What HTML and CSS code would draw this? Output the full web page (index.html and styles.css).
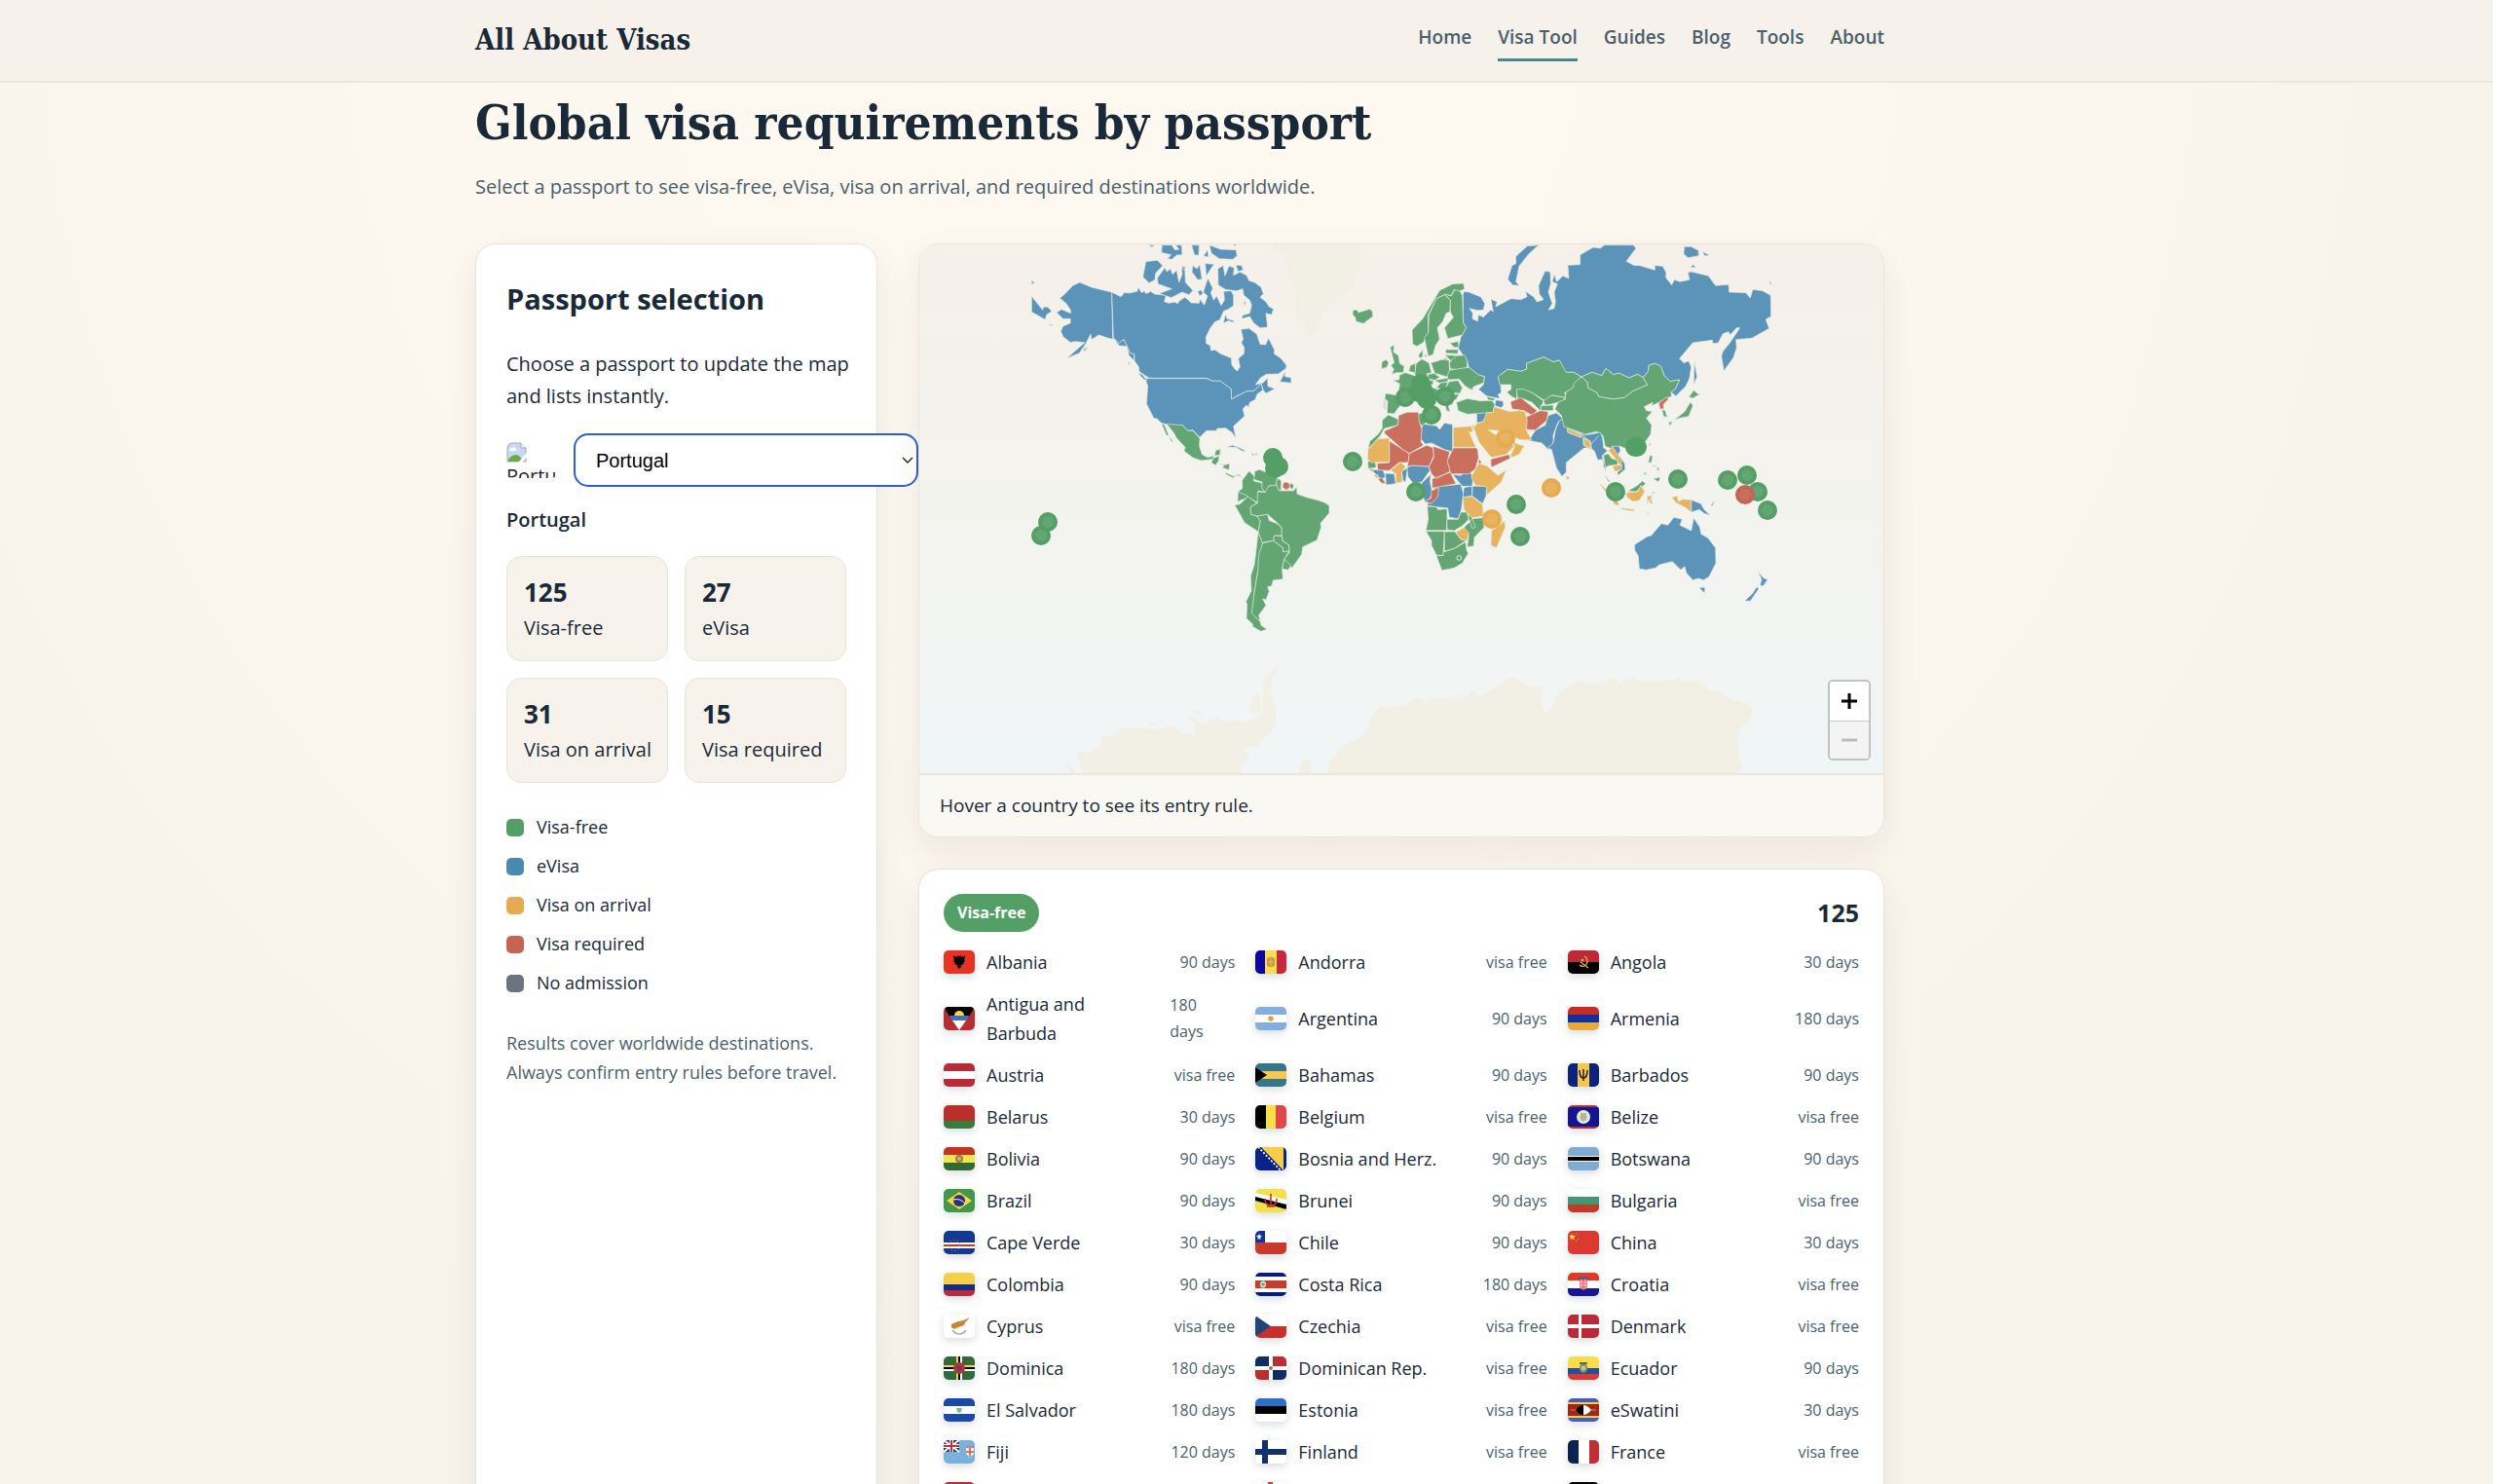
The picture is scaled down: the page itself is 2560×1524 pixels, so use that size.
FILE: index.html
```html
<!DOCTYPE html>
<html lang="en">
<head>
<meta charset="utf-8">
<meta name="viewport" content="width=device-width, initial-scale=1">
<title>Global visa requirements by passport | All About Visas</title>
<link rel="stylesheet" href="styles.css">
</head>
<body>
<header class="site-header">
  <div class="wrap header-row">
    <a class="brand" href="#home">All About Visas</a>
    <nav class="nav" aria-label="Main">
      <a href="#home">Home</a>
      <a href="#visa-tool" class="active" aria-current="page">Visa Tool</a>
      <a href="#guides">Guides</a>
      <a href="#blog">Blog</a>
      <a href="#tools">Tools</a>
      <a href="#about">About</a>
    </nav>
  </div>
</header>

<main class="wrap">
  <h1>Global visa requirements by passport</h1>
  <p class="lead">Select a passport to see visa-free, eVisa, visa on arrival, and required destinations worldwide.</p>

  <div class="layout">
    <aside class="card panel">
      <h2>Passport selection</h2>
      <p class="intro"><label for="passport">Choose a passport to update the map and lists instantly.</label></p>
      <div class="picker">
        <span class="picker-flag">
          <svg viewBox="0 0 21 21" width="21" height="21" aria-hidden="true">
            <path d="M1 20V5Q2 1 6 1H15L20 6V20Z" fill="#c9d8f5" stroke="#a9a9a9"/>
            <path d="M15 1V6H20" fill="#fff" stroke="#a9a9a9"/>
            <path d="M3 9Q3 6 6 6Q8 4 10 7Q11 8 10 9Z" fill="#fff"/>
            <path d="M1 20Q4 13 10 13Q14 13 17 20Z" fill="#6aab46"/>
            <path d="M12 21L21 11V15L16 21Z" fill="#fff"/>
          </svg>
          <span>Portugal</span>
        </span>
        <span class="picker-field">
          <select id="passport"><option>Portugal</option><option>Spain</option><option>France</option></select>
          <svg class="chevron" viewBox="0 0 12 8" width="12" height="8" aria-hidden="true"><path d="M1 1L6 6L11 1" fill="none" stroke="#222" stroke-width="1.4"/></svg>
        </span>
      </div>
      <p class="current">Portugal</p>
      <div class="stats">
        <div class="stat"><strong>125</strong><span>Visa-free</span></div>
        <div class="stat"><strong>27</strong><span>eVisa</span></div>
        <div class="stat"><strong>31</strong><span>Visa on arrival</span></div>
        <div class="stat"><strong>15</strong><span>Visa required</span></div>
      </div>
      <ul class="legend">
        <li><i class="swatch free"></i>Visa-free</li>
        <li><i class="swatch evisa"></i>eVisa</li>
        <li><i class="swatch arrival"></i>Visa on arrival</li>
        <li><i class="swatch required"></i>Visa required</li>
        <li><i class="swatch none"></i>No admission</li>
      </ul>
      <p class="note">Results cover worldwide destinations. Always confirm entry rules before travel.</p>
    </aside>

    <div class="results">
      <section class="card map-card" aria-label="World map">
        <div class="map">
          <svg class="world" viewBox="944 251 990 543" role="img" aria-label="Entry rules by country">
            <!-- Greenland -->
            <path class="land" d="M1308 251L1317 262 1325 285 1332 301 1329 312 1333 325 1345 348 1352 337 1358 320 1373 308 1388 297 1391 285 1396 275 1397 251Z"/>
            <!-- Antarctica -->
            <g class="land" transform="translate(940 640) scale(.6441 .3333)">
              <path d="M248 470L240 432 244 428 258 470Z"/>
              <path d="M268 470L256 395 262 392 272 405 285 390 295 375 295 350 315 345 330 322 355 325 390 327 408 312 425 340 445 345 447 320 436 288 458 312 482 290 500 308 512 295 520 308 545 290 553 275 555 180 568 145 582 128 568 175 565 210 575 260 574 320 545 380 522 382 532 410 520 432 519 470Z"/>
              <path d="M532 270L540 220 549 220 550 278ZM438 270L458 272 452 280ZM372 305L384 310 376 318ZM357 300L363 300 363 310ZM611 470L618 420 630 422 630 470Z"/>
              <path d="M659 470L659 430 680 380 710 350 722 330 724 300 740 255 752 262 780 252 800 230 812 245 830 230 870 235 889 208 898 228 930 192 952 165 978 195 1000 196 997 235 1003 280 1015 265 1022 225 1040 195 1062 175 1075 188 1098 185 1112 163 1122 185 1145 168 1160 182 1210 175 1220 165 1225 182 1250 178 1265 208 1278 210 1300 235 1318 242 1336 265 1328 305 1315 320 1310 350 1314 425 1322 438 1305 470Z"/>
            </g>

            <!-- The Americas -->
            <g transform="translate(1040 240) scale(.3333)">
              <g class="evisa">
                <path d="M305 180L245 166 206 150 185 160 158 188 145 199 165 215 178 235 178 245 150 233 135 243 155 262 177 262 178 275 155 285 148 300 155 317 178 335 190 332 222 335 210 346 167 383 205 368 225 338 240 310 243 326 265 312 295 322 308 325Z"/>
                <path d="M310 321L328 337 342 325 362 368 375 370 373 390 358 375 352 347 328 345Z"/>
                <path d="M58 193L92 235 95 225 108 226 120 239 104 250 100 265 58 241ZM58 145L68 150 58 156ZM218 356L232 350 220 362ZM110 277L122 281 120 284ZM356 397L362 396 359 404Z"/>
                <path d="M305 180L333 194 345 181 358 183 383 178 387 166 397 182 406 176 410 185 425 178 437 186 472 190 467 209 480 214 500 211 508 216 512 208 530 196 543 206 549 213 574 214 577 202 590 220 600 192 587 180 601 137 616 168 610 182 619 205 628 192 642 221 652 205 650 178 672 176 680 190 680 222 660 235 650 238 638 265 622 272 609 290 595 318 596 338 609 345 610 360 623 358 640 370 673 383 675 405 685 418 692 423 700 410 695 385 712 370 713 350 704 336 710 325 703 295 728 292 752 310 762 341 779 342 788 322 806 358 805 370 826 384 843 405 842 415 818 432 782 433 763 444 748 465 770 460 785 445 786 470 807 478 780 492 772 482 765 462 744 484 720 486 690 500 674 510 673 479 640 454 615 454 597 445 420 445 390 425 388 410 375 392 375 370 362 368 342 325 328 337 310 321Z"/>
                <path d="M420 446L597 446 615 454 640 454 673 479 674 510 692 500 720 486 744 484 765 462 770 482 752 495 748 510 730 520 726 535 720 528 709 540 714 562 680 593 687 630 675 612 656 599 630 600 628 607 597 607 576 627 555 605 539 607 523 590 490 593 458 583 444 570 434 568 412 524 416 470 408 446Z"/>
                <path d="M410 86L445 82 462 98 440 122 438 142 420 152 401 133ZM388 431L398 433 414 452 402 447Z"/>
                <path d="M445 137L468 105 475 117 486 108 492 125 505 113 512 150 522 125 520 105 530 106 532 150 555 175 543 188 522 180 488 197 452 184 490 170 448 155Z"/>
                <path d="M420 35L438 35 428 41ZM460 35L490 35 500 50 512 48 502 35 520 35 522 65 505 66 490 79 477 77 488 65 458 58ZM551 35L574 35 573 66 560 66ZM606 35L640 48 688 50 691 68 678 79 636 77 612 60ZM600 50L603 72 588 68ZM555 98L567 108 576 96 583 140 570 142 552 118ZM593 92L620 94 596 130ZM570 178L580 173 586 184 576 192ZM522 100L532 103 526 112ZM681 33H687V37H681Z"/>
                <path d="M632 108L648 98 654 130 666 100 682 105 680 128 700 118 720 128 728 145 745 150 765 165 772 185 762 196 780 210 790 225 803 232 797 250 780 245 785 288 762 290 742 275 730 255 707 262 707 252 730 245 736 220 730 205 712 190 708 170 690 176 655 172 633 158ZM688 97L705 98 710 112 694 116ZM712 208L718 212 714 222ZM655 248L660 262 680 268 680 274 664 268 649 276Z"/>
                <path d="M840 424L838 440 857 443 858 460 823 456ZM660 658L677 652 700 660 718 670 708 670 688 658Z"/>
              </g>
              <g class="free">
                <path d="M474 586L523 590 539 607 555 607 576 630 575 655 583 680 600 689 622 684 625 668 640 664 638 682 620 684 617 694 600 697 580 699 555 690 528 670 531 658 505 630 495 612Z"/>
                <path d="M458 584L468 590 480 620 474 622ZM480 622L495 642 488 640Z"/>
                <path d="M617 692L636 684 634 700 625 713 612 706ZM636 708L655 712 668 708 666 728 645 720 652 714ZM655 736L680 747 695 742 706 750 690 744 678 752 656 741ZM737 676L745 682 738 684ZM748 677L756 680 748 682Z"/>
                <path d="M707 760L728 731 745 748 742 762 768 768 770 788 778 797 756 792 754 828 724 812 700 800 694 795 707 785Z"/>
                <path d="M745 748L745 732 760 727 815 748 812 775 788 778 785 795 778 797 768 785 768 765 742 757Z"/>
                <path d="M694 796L724 808 720 815 700 822 693 828ZM684 836L700 833 724 810 752 830 732 842 734 865 752 870 763 885 756 918 714 890Z"/>
                <path d="M815 752L827 762 826 790 818 792 812 772ZM856 768L866 775 862 788 852 780Z"/>
                <path d="M754 795L778 797 788 778 812 774 820 792 865 792 875 780 876 802 905 812 940 821 960 828 975 838 975 860 960 878 948 892 950 905 937 944 893 965 890 988 860 1030 836 1003 852 982 850 958 832 948 828 928 828 905 812 888 785 865 752 870 734 865 732 842 754 830Z"/>
                <path d="M752 870L785 865 790 884 812 892 828 905 828 930 806 930 803 946 768 952 756 920 763 885Z"/>
                <path d="M806 930L828 932 832 948 850 958 852 978 832 980 832 968 803 946Z"/>
                <path d="M836 1003L858 1022 848 1036 830 1032Z"/>
                <path d="M756 920L770 955 762 990 755 1040 745 1100 738 1170 762 1195 765 1207 783 1219 765 1225 738 1210 740 1204 720 1185 722 1140 718 1135 735 1100 733 1055 744 1020 748 990Z"/>
                <path d="M770 953L803 946 832 968 832 980 852 978 836 1003 830 1030 832 1064 802 1068 798 1085 785 1088 790 1102 780 1128 770 1125 780 1145 758 1175 762 1195 736 1170 745 1100 755 1040 758 990Z"/>
              </g>
              <path class="required" d="M832 772L838 765 852 768 853 782 843 790 832 782Z"/>
            </g>

            <!-- Europe, Africa and the Middle East -->
            <g transform="translate(1360 240) scale(.3333)">
              <g class="evisa">
                <path d="M427 190L430 178 445 180 482 195 494 215 490 235 470 236 447 230 457 245 456 262 472 270 475 250 490 257 512 235 520 240 513 202 532 210 528 225 575 200 605 203 624 195 620 178 645 195 655 210 675 203 662 185 660 160 680 115 696 118 697 155 690 180 702 215 690 235 708 230 712 210 708 180 718 155 702 148 708 125 716 148 735 130 753 138 750 97 788 95 788 65 828 42 850 45 862 35 952 35 960 45 930 85 955 98 972 98 1018 112 1018 98 1042 100 1053 120 1052 135 1070 158 1078 142 1095 148 1125 142 1120 120 1130 117 1183 130 1205 160 1245 157 1247 180 1298 182 1312 198 1320 172 1350 176 1375 190 1376 255 1360 264 1370 292 1317 322 1268 326 1270 352 1260 382 1231 422 1223 378 1228 362 1250 335 1280 290 1270 290 1250 312 1245 302 1228 308 1213 337 1197 338 1195 328 1135 336 1094 385 1108 398 1122 392 1130 410 1125 445 1113 470 1083 500 1068 488 1080 480 1094 450 1065 455 1047 437 1036 408 1020 400 1000 405 997 425 982 443 965 433 938 444 908 430 890 434 867 415 855 437 824 427 792 441 768 427 742 427 724 390 706 395 676 380 622 400 624 417 605 424 565 418 545 432 535 445 543 465 545 490 535 495 540 508 500 500 475 480 490 465 493 440 475 435 445 412 440 392 412 352 420 320 437 288 428 275Z"/>
                <path d="M660 35L625 38 590 70 590 92 578 98 565 140 580 158 600 160 590 148 600 100 630 62ZM367 385L378 384 377 391 367 391ZM450 475L460 474 453 484Z"/>
                <path d="M1109 40L1130 40 1153 52 1153 68 1120 74 1107 62ZM1164 55L1186 66 1172 68ZM1136 95L1144 104 1128 104ZM1370 148H1376V158ZM1140 394L1148 440 1138 465Z"/>
                <path d="M528 512L550 516 552 528 545 536 525 530ZM469 553L502 550 490 578 470 583Z"/>
                <path d="M302 586L345 592 355 603 370 583 395 588 395 672 370 665 330 645 310 648 296 630Z"/>
                <path d="M254 720L270 714 322 718 325 730 300 765 275 770 258 750ZM300 768L328 742 325 762 333 800 325 815 310 828 302 800Z"/>
                <path d="M145 728L180 727 188 748 176 758ZM188 738L215 740 220 770 190 774ZM238 732L256 722 250 765 242 760Z"/>
                <path d="M395 742L420 745 445 724 458 752 455 778 425 778Z"/>
                <path d="M340 780L420 772 428 800 422 850 412 878 385 874 380 845 345 842 317 838 325 815 338 812Z"/>
                <path d="M430 782L455 778 455 808 427 812ZM456 778L500 778 498 808 487 832 455 808Z"/>
                <path d="M630 637L650 606 680 590 690 560 715 552 735 570 720 580 705 620 705 645 690 665 670 645Z"/>
                <path d="M735 568L740 590 790 615 830 618 840 625 835 660 800 660 745 705 745 735 732 748 715 722 700 665 688 660 705 645 712 605 722 580Z"/>
              </g>
              <g class="free">
                <path d="M88 236L100 234 105 243 140 232 148 240 149 255 120 277 97 270 95 257 87 250Z"/>
                <path d="M203 350L215 342 213 365 228 375 232 400 246 408 243 428 222 428 207 433 214 418 205 405 215 398ZM177 395L190 388 198 398 192 412 176 416Z"/>
                <path d="M270 297L303 262 355 175 395 155 428 153 432 170 415 178 400 172 390 190 370 188 345 200 320 250 320 305 305 335 285 347 272 340Z"/>
                <path d="M345 200L370 188 388 205 387 240 375 245 365 270 348 290 355 325 342 345 335 372 320 378 308 320 320 305 322 250Z"/>
                <path d="M370 186L390 192 402 172 418 178 425 190 428 275 437 288 425 312 380 323 370 290 397 258 388 240 388 205Z"/>
                <path d="M290 375L303 357 303 378 294 384ZM308 374L315 372 312 381Z"/>
                <path d="M387 337L412 332 414 350 400 350ZM373 357L413 357 410 370 374 368ZM372 374L405 375 405 388 392 394Z"/>
                <path d="M405 376L432 374 440 392 440 412 415 420 388 416 385 398Z"/>
                <path d="M328 398L362 388 384 390 386 435 375 440 340 430Z"/>
                <path d="M283 400L300 386 322 398 330 428 315 432 322 450 285 450 278 430Z"/>
                <path d="M265 406L280 400 280 428 260 424ZM212 452L230 450 232 435 250 428 280 438 278 480 280 500 245 500 228 495 232 462Z"/>
                <path d="M188 492L225 498 250 510 225 540 215 555 193 553 195 515 186 510Z"/>
                <path d="M318 434L338 430 355 442 340 452 320 446ZM283 455L335 452 335 465 300 466ZM338 452L382 444 380 455 355 460ZM345 475L360 458 382 458 370 478Z"/>
                <path d="M386 420L445 412 475 435 493 440 490 460 462 470 450 480 432 468 415 448 382 450 378 440Z"/>
                <path d="M372 478L385 455 412 452 425 475 418 492 380 490ZM378 496L415 494 405 512 380 512ZM370 515L398 512 395 525 382 530 387 548 376 545Z"/>
                <path d="M255 485L300 470 318 490 345 520 330 525 300 500 280 505ZM312 468L345 478 365 500 370 530 345 515 318 488Z"/>
                <path d="M407 520L440 508 480 515 515 514 525 525 520 550 470 554 440 556 412 545ZM500 502L525 508 522 515 505 512Z"/>
                <path d="M197 558L228 572 226 590 185 600 170 625 152 645 135 662 140 640 165 618 178 600 178 575ZM290 555L310 550 316 580 300 592 286 575Z"/>
                <path d="M134 702L155 698 160 720 135 724Z"/>
                <path d="M535 440L565 418 605 424 624 417 622 400 676 380 706 395 724 390 745 427 768 427 790 440 780 460 760 480 740 490 745 505 700 498 680 515 640 490 595 480 592 510 575 500 562 488 575 480 575 465 540 465Z"/>
                <path d="M592 480L612 478 640 490 675 515 670 530 665 545 640 520 610 508 595 508ZM675 515L700 498 742 505 735 515 700 525 680 528ZM665 530L705 528 705 545 668 545Z"/>
                <path d="M317 840L345 842 350 850 378 848 378 880 376 914 313 914 320 880ZM313 917L370 917 366 992 345 990 330 960 330 945Z"/>
                <path d="M378 880L412 880 420 858 440 858 445 880 425 900 400 915 378 912ZM440 862L455 875 465 905 455 908ZM455 878L490 875 492 905 462 935 460 962 440 965 445 930 430 905 448 888Z"/>
                <path d="M370 918L402 918 420 942 437 945 400 970 370 980ZM366 980L400 970 435 950 438 975 443 985 425 1015 400 1030 362 1037 345 992 366 992Z"/>
                <path d="M585 640L590 650 583 655ZM456 590L460 590 459 602Z"/>
              </g>
              <circle cx="415" cy="999" r="7" class="land-line"/>
              <g class="required">
                <path d="M228 572L228 560 255 550 290 550 292 580 300 600 298 642 305 652 262 677 245 668 185 615 185 608 226 590Z"/>
                <path d="M200 638L262 678 258 705 230 705 200 730 165 728 162 708 200 705Z"/>
                <path d="M262 677L315 652 335 660 337 685 322 717 270 714 256 718Z"/>
                <path d="M335 655L386 672 380 700 388 732 345 755 330 740 322 718 337 690ZM332 755L388 735 405 770 332 784Z"/>
                <path d="M397 660L472 660 475 690 465 725 445 740 390 740 378 700 388 680Z"/>
                <path d="M330 792L352 782 350 810 330 832 308 825 328 815ZM475 693L485 705 475 710ZM165 755L178 752 190 770 175 768Z"/>
                <path d="M510 695L570 680 572 692 515 720ZM573 518L605 505 655 545 640 560 615 545 578 540Z"/>
                <path d="M622 565L665 545 690 548 685 575 650 605 622 603Z"/>
              </g>
              <g class="arrival">
                <path d="M134 665L165 632 200 630 200 703 145 705 133 695ZM138 724L152 724 145 735ZM152 744L165 742 165 756ZM205 728L235 704 250 718 238 735 240 765 220 768 220 740Z"/>
                <path d="M397 597L452 593 458 605 450 615 470 658 397 658Z"/>
                <path d="M460 598L470 585 490 578 500 552 520 550 522 533 545 540 570 548 600 545 618 548 625 575 622 605 638 635 605 635 570 622 545 608 520 605 505 605 560 640 585 655 560 680 510 690 495 680 475 640Z"/>
                <path d="M575 682L590 645 615 655 600 680 575 690ZM475 708L500 715 535 745 560 728 545 765 500 805 500 780 465 775 452 750Z"/>
                <path d="M427 812L455 810 487 835 490 870 455 875 430 850ZM405 920L430 905 445 922 440 945 420 942ZM555 885L557 905 530 968 513 960 515 915 530 905Z"/>
                <path d="M748 600L795 618 790 628 750 612ZM797 628L820 640 822 665 798 652ZM745 744L755 752 747 760Z"/>
              </g>
              <path class="gap" d="M443 605L475 640 515 690 512 720 485 690 460 645Z"/>
              <path class="soft-required" d="M183 508L190 512 190 545 180 535Z"/>
            </g>

            <!-- Asia and Oceania -->
            <g transform="translate(1600 240) scale(.3333)">
              <g class="free">
                <path d="M72 441L104 427 135 437 147 415 170 434 188 430 218 444 245 433 262 443 275 466 230 485 205 505 170 510 125 502 120 490 92 475 90 458Z"/>
                <path d="M262 443L277 425 280 405 300 400 316 408 327 437 345 455 374 450 360 480 348 488 350 500 310 520 288 530 292 520 265 533 272 545 290 548 272 568 288 590 285 618 262 650 225 668 190 655 165 662 145 655 138 622 120 610 82 618 50 605 18 595 10 560 -10 540 0 520 22 510 24 488 45 475 50 460 72 441 90 458 92 475 120 490 125 502 170 510 205 505 230 485 275 466Z"/>
                <path d="M418 482L428 492 437 494 415 507 403 503ZM408 518L415 530 402 563 375 568 357 575 390 548ZM340 580L352 580 345 592ZM320 542L330 545 336 565 325 563ZM280 648L286 644 282 655Z"/>
                <path d="M140 682L155 678 165 692 185 700 182 712 155 715 145 722ZM143 742L160 765 155 765ZM283 684L291 684 287 706 278 704ZM290 714L302 715 296 718ZM293 755L315 750 310 765ZM263 742L272 732 270 742ZM215 793L245 775 260 762 270 770 240 795ZM302 722L310 720 311 732Z"/>
              </g>
              <path class="required" d="M310 522L335 503 340 510 325 525 325 540 314 540Z"/>
              <g class="evisa">
                <path d="M75 622L100 618 130 612 137 630 140 660 152 668 135 685 140 695 122 697 112 670 103 662 100 640ZM165 655L188 655 192 668 185 680 205 708 207 725 185 744 182 738 195 720 190 700 178 675ZM138 688L145 715 147 735 140 715Z"/>
                <path d="M410 820L440 832 450 850 468 868 450 862 435 850 410 858ZM470 838L482 822 476 838Z"/>
                <path d="M236 958L275 933 287 930 318 893 338 898 357 874 382 880 375 898 410 915 418 876 437 905 440 925 462 938 485 968 486 1015 465 1057 448 1067 432 1062 415 1067 395 1045 390 1025 378 1036 352 1010 312 1020 300 1030 270 1036 250 1032 247 993 236 975ZM435 1090L452 1090 452 1106 445 1102Z"/>
                <path d="M616 1042L632 1060 645 1066 632 1085 622 1083 627 1065ZM612 1088L618 1094 592 1132 575 1131 598 1110Z"/>
              </g>
              <g class="arrival">
                <path d="M28 600L74 622 70 628 30 612ZM78 630L98 640 102 662 82 652ZM155 668L168 656 178 672 197 705 190 712 170 685ZM168 715L197 712 195 728 175 732Z"/>
                <path d="M126 768L145 785 185 825 187 838 175 835 150 800ZM190 844L235 850 232 855 200 850ZM210 798L245 795 255 775 267 795 250 822 230 825 212 812ZM275 808L292 808 285 815 292 832 285 832 280 818 275 835ZM290 796L300 798 290 801ZM350 812L367 808 370 825 385 818 410 820 410 858 395 845 362 828ZM272 862L280 863 276 866Z"/>
              </g>
              <path class="line" d="M100 650L125 622"/>
            </g>

            <!-- Small states and territories -->
            <g class="dot free">
              <circle cx="1076" cy="536" r="8"/><circle cx="1069" cy="550" r="8"/>
              <circle cx="1389" cy="474" r="8"/><circle cx="1454" cy="505" r="8"/><circle cx="1557" cy="518" r="8"/><circle cx="1561" cy="551" r="8"/>
              <circle cx="1443" cy="408" r="8"/><circle cx="1484" cy="407" r="8"/><circle cx="1470" cy="426" r="8"/>
              <circle cx="1659" cy="505" r="8"/><circle cx="1723" cy="492" r="8"/>
              <circle cx="1774" cy="493" r="8"/><circle cx="1794" cy="488" r="8"/><circle cx="1805" cy="505" r="8"/><circle cx="1815" cy="524" r="8"/>
            </g>
            <g class="dot free cluster">
              <circle cx="1307" cy="470" r="8"/><circle cx="1313" cy="479" r="8"/><circle cx="1309" cy="481" r="8"/>
              <circle cx="1459" cy="394" r="8"/><circle cx="1461" cy="400" r="8"/><circle cx="1463" cy="406" r="8"/><circle cx="1465" cy="410" r="8"/><circle cx="1457" cy="403" r="8"/>
              <circle cx="1679" cy="459" r="8"/><circle cx="1681" cy="459" r="8"/>
            </g>
            <g class="dot required"><circle cx="1792" cy="508" r="8"/></g>
            <g class="dot arrival"><circle cx="1546" cy="450" r="8"/><circle cx="1593" cy="501" r="8"/><circle cx="1532" cy="533" r="8"/></g>
          </svg>
          <div class="zoom">
            <button type="button" aria-label="Zoom in"><svg viewBox="0 0 20 20" width="20" height="20"><path d="M10 2V18M2 10H18" stroke="#000" stroke-width="3"/></svg></button>
            <button type="button" aria-label="Zoom out" disabled><svg viewBox="0 0 20 20" width="20" height="20"><path d="M2 10H18" stroke="#bbb" stroke-width="3"/></svg></button>
          </div>
        </div>
        <p class="map-caption">Hover a country to see its entry rule.</p>
      </section>

      <section class="card list-card">
        <div class="list-head"><h3 class="pill">Visa-free</h3><strong class="count">125</strong></div>
        <ul class="countries">
          <li><svg class="flag" viewBox="0 0 32 24"><path fill="#e93322" d="M0 0H32V24H0Z"/><path d="M10 5L12 7 13 6 15 7 14 5 16 6 18 5 17 7 19 6 20 7 22 5 22 8 21 10 22 11 20 13 21 14 18 15 18 17 16 19 14 17 14 15 11 14 12 13 10 11 11 10 10 8Z"/></svg><span class="name">Albania</span><span class="rule">90 days</span></li>
          <li><svg class="flag" viewBox="0 0 32 24"><path fill="#10069f" d="M0 0H11V24H0Z"/><path fill="#f9dd4f" d="M10 0H22V24H10Z"/><path fill="#c7283b" d="M22 0H32V24H22Z"/><rect x="12" y="7" width="8" height="10" rx="3" fill="#c9973f"/><path d="M13 12H19M16 8V16" stroke="#e8c070"/></svg><span class="name">Andorra</span><span class="rule">visa free</span></li>
          <li><svg class="flag" viewBox="0 0 32 24"><path fill="#bb2a36" d="M0 0H32V12H0Z"/><path d="M0 12H32V24H0Z"/><path d="M17 6C21 8 21 14 17 16Q14 17 12 15M13 12L21 18" fill="none" stroke="#e8b93a" stroke-width="1.2"/><circle cx="15" cy="10" r="1.2" fill="#f5d84a"/></svg><span class="name">Angola</span><span class="rule">30 days</span></li>
          <li class="tight"><svg class="flag" viewBox="0 0 32 24"><path fill="#bb2c31" d="M0 0H32V24H0Z"/><path d="M0 0H32L26 10H6Z"/><circle cx="16" cy="9" r="5" fill="#f7d546"/><path fill="#3a74c4" d="M6 9H26L23 15H9Z"/><path fill="#fff" d="M9 14H23L16 24Z"/></svg><span class="name">Antigua and Barbuda</span><span class="rule">180 days</span></li>
          <li><svg class="flag" viewBox="0 0 32 24"><path fill="#84aedd" d="M0 0H32V24H0Z"/><path fill="#fff" d="M0 8H32V16H0Z"/><circle cx="16" cy="12" r="2.7" fill="#dfa13c"/></svg><span class="name">Argentina</span><span class="rule">90 days</span></li>
          <li><svg class="flag" viewBox="0 0 32 24"><path fill="#c62b24" d="M0 0H32V8H0Z"/><path fill="#122f9b" d="M0 8H32V16H0Z"/><path fill="#e8a93d" d="M0 16H32V24H0Z"/></svg><span class="name">Armenia</span><span class="rule">180 days</span></li>
          <li><svg class="flag" viewBox="0 0 32 24"><path fill="#b92b38" d="M0 0H32V24H0Z"/><path fill="#fff" d="M0 8H32V16H0Z"/></svg><span class="name">Austria</span><span class="rule">visa free</span></li>
          <li><svg class="flag" viewBox="0 0 32 24"><path fill="#357688" d="M0 0H32V24H0Z"/><path fill="#f5c650" d="M0 8H32V16H0Z"/><path d="M0 4L12 12 0 20Z"/></svg><span class="name">Bahamas</span><span class="rule">90 days</span></li>
          <li><svg class="flag" viewBox="0 0 32 24"><path fill="#0c2478" d="M0 0H32V24H0Z"/><path fill="#f5c650" d="M10 0H22V24H10Z"/><path d="M12 7Q12 15 16 15Q20 15 20 7M16 6V18" fill="none" stroke="#221c10" stroke-width="1.5"/></svg><span class="name">Barbados</span><span class="rule">90 days</span></li>
          <li><svg class="flag" viewBox="0 0 32 24"><path fill="#ba2f29" d="M0 0H32V16H0Z"/><path fill="#387b3a" d="M0 16H32V24H0Z"/></svg><span class="name">Belarus</span><span class="rule">30 days</span></li>
          <li><svg class="flag" viewBox="0 0 32 24"><path d="M0 0H11V24H0Z"/><path fill="#f9dd4f" d="M11 0H22V24H11Z"/><path fill="#df4749" d="M21 0H32V24H21Z"/></svg><span class="name">Belgium</span><span class="rule">visa free</span></li>
          <li><svg class="flag" viewBox="0 0 32 24"><path fill="#c52f28" d="M0 0H32V24H0Z"/><path fill="#141592" d="M0 2H32V22H0Z"/><circle cx="16" cy="12" r="7" fill="#e4ecd9"/><path fill="#a9bc9c" d="M12 11H20L19 15 16 17 13 15Z"/><path fill="#c5b28a" d="M13 8H19V11H13Z"/></svg><span class="name">Belize</span><span class="rule">visa free</span></li>
          <li><svg class="flag" viewBox="0 0 32 24"><path fill="#c5321f" d="M0 0H32V8H0Z"/><path fill="#efe655" d="M0 8H32V16H0Z"/><path fill="#316b34" d="M0 16H32V24H0Z"/><circle cx="16" cy="12" r="4" fill="#b5762f"/><circle cx="16" cy="12" r="2" fill="#9cc3ad"/></svg><span class="name">Bolivia</span><span class="rule">90 days</span></li>
          <li><svg class="flag" viewBox="0 0 32 24"><path fill="#0b218c" d="M0 0H32V24H0Z"/><path fill="#f5cd47" d="M6 0H29V24Z"/><path d="M3 0L26 24" stroke="#fff" stroke-width="1.8" stroke-dasharray="2 1.8"/></svg><span class="name">Bosnia and Herz.</span><span class="rule">90 days</span></li>
          <li><svg class="flag" viewBox="0 0 32 24"><path fill="#80abd3" d="M0 0H32V24H0Z"/><path fill="#fff" d="M0 9H32V15H0Z"/><path d="M0 10H32V14H0Z"/></svg><span class="name">Botswana</span><span class="rule">90 days</span></li>
          <li><svg class="flag" viewBox="0 0 32 24"><path fill="#43964a" d="M0 0H32V24H0Z"/><path fill="#f6d544" d="M3 12L16 3 29 12 16 21Z"/><circle cx="16" cy="12" r="6" fill="#2a3081"/><path d="M10 11Q17 9 22 15" fill="none" stroke="#fff"/></svg><span class="name">Brazil</span><span class="rule">90 days</span></li>
          <li><svg class="flag" viewBox="0 0 32 24"><path fill="#f3e14b" d="M0 0H32V24H0Z"/><path fill="#fff" d="M0 4L32 11V16L0 8Z"/><path d="M0 8L32 16V21L0 12Z"/><path d="M10 10Q10 17 16 17Q22 17 22 10M16 5V18M12 18H20" fill="none" stroke="#c8372d" stroke-width="1.6"/></svg><span class="name">Brunei</span><span class="rule">90 days</span></li>
          <li><svg class="flag" viewBox="0 0 32 24"><path fill="#fff" d="M0 0H32V8H0Z"/><path fill="#459672" d="M0 8H32V16H0Z"/><path fill="#c53a27" d="M0 16H32V24H0Z"/></svg><span class="name">Bulgaria</span><span class="rule">visa free</span></li>
          <li><svg class="flag" viewBox="0 0 32 24"><path fill="#153891" d="M0 0H32V24H0Z"/><path fill="#fff" d="M0 12H32V18H0Z"/><path fill="#c33a35" d="M0 14H32V16H0Z"/><circle cx="11" cy="15" r="5.5" fill="none" stroke="#d5b64f" stroke-dasharray="1 2.5"/></svg><span class="name">Cape Verde</span><span class="rule">30 days</span></li>
          <li><svg class="flag" viewBox="0 0 32 24"><path fill="#fff" d="M0 0H32V12H0Z"/><path fill="#12329b" d="M0 0H10V12H0Z"/><path fill="#c93a2c" d="M0 12H32V24H0Z"/><path fill="#fff" d="M4 3L5 5H7L5 7 6 9 4 8 2 9 3 7 1 5H3Z"/></svg><span class="name">Chile</span><span class="rule">90 days</span></li>
          <li><svg class="flag" viewBox="0 0 32 24"><path fill="#dc3a30" d="M0 0H32V24H0Z"/><path fill="#fbe44b" d="M4 3L5 5H8L6 7 7 9 4 8 2 9 3 7 1 5H3ZM8 2H9V3H8ZM10 4H11V5H10ZM10 8H11V9H10ZM8 10H9V11H8Z"/></svg><span class="name">China</span><span class="rule">30 days</span></li>
          <li><svg class="flag" viewBox="0 0 32 24"><path fill="#f7cf46" d="M0 0H32V12H0Z"/><path fill="#122e87" d="M0 12H32V18H0Z"/><path fill="#bb2a36" d="M0 18H32V24H0Z"/></svg><span class="name">Colombia</span><span class="rule">90 days</span></li>
          <li><svg class="flag" viewBox="0 0 32 24"><path fill="#071a8c" d="M0 0H32V24H0Z"/><path fill="#fff" d="M0 4H32V20H0Z"/><path fill="#cb3b29" d="M0 8H32V16H0Z"/><ellipse cx="8" cy="12" rx="3" ry="3.6" fill="#dfe5d5"/><circle cx="8" cy="12" r="1.8" fill="#7c9a83"/></svg><span class="name">Costa Rica</span><span class="rule">180 days</span></li>
          <li><svg class="flag" viewBox="0 0 32 24"><path fill="#e93522" d="M0 0H32V8H0Z"/><path fill="#fff" d="M0 8H32V16H0Z"/><path fill="#171796" d="M0 16H32V24H0Z"/><path fill="#ee6a60" d="M12 7H20V15L16 18 12 15Z"/><path d="M14 7V17M18 7V17M12 10H20M12 13H20" stroke="#fbd0cc" stroke-width=".8"/><path fill="#3b62a8" d="M11 5L13 4 16 5 19 4 21 5 21 7H11Z"/></svg><span class="name">Croatia</span><span class="rule">visa free</span></li>
          <li><svg class="flag" viewBox="0 0 32 24"><path fill="#fff" d="M0 0H32V24H0Z"/><path fill="#cb8430" d="M8 10L15 7 20 6 27 3 22 8 21 11 15 13 11 15 8 13Z"/><path d="M9 16Q12 20 16 20Q20 20 23 16" fill="none" stroke="#a9ae98" stroke-width="1.5"/></svg><span class="name">Cyprus</span><span class="rule">visa free</span></li>
          <li><svg class="flag" viewBox="0 0 32 24"><path fill="#fff" d="M0 0H32V12H0Z"/><path fill="#c9302c" d="M0 12H32V24H0Z"/><path fill="#254379" d="M0 1L16 12 0 23Z"/></svg><span class="name">Czechia</span><span class="rule">visa free</span></li>
          <li><svg class="flag" viewBox="0 0 32 24"><path fill="#b92b38" d="M0 0H32V24H0Z"/><path fill="#fff" d="M11 0H14V24H11ZM0 10H32V14H0Z"/></svg><span class="name">Denmark</span><span class="rule">visa free</span></li>
          <li><svg class="flag" viewBox="0 0 32 24"><path fill="#316b3b" d="M0 0H32V24H0Z"/><path fill="#f2d64a" d="M13 0H15V24H13ZM0 9H32V11H0Z"/><path fill="#fff" d="M17 0H19V24H17ZM0 13H32V15H0Z"/><path d="M15 0H17V24H15ZM0 11H32V13H0Z"/><circle cx="16" cy="12" r="6" fill="#bd3038"/><circle cx="16" cy="12" r="2.5" fill="#4b4a6b"/></svg><span class="name">Dominica</span><span class="rule">180 days</span></li>
          <li><svg class="flag" viewBox="0 0 32 24"><path fill="#fff" d="M0 0H32V24H0Z"/><path fill="#102c60" d="M0 0H14V10H0ZM18 14H32V24H18Z"/><path fill="#bd2c31" d="M18 0H32V10H18ZM0 14H14V24H0Z"/><circle cx="16" cy="12" r="2" fill="#9a7363"/></svg><span class="name">Dominican Rep.</span><span class="rule">visa free</span></li>
          <li><svg class="flag" viewBox="0 0 32 24"><path fill="#f9dd4f" d="M0 0H32V12H0Z"/><path fill="#264e9e" d="M0 12H32V18H0Z"/><path fill="#dc3a30" d="M0 18H32V24H0Z"/><ellipse cx="16" cy="12" rx="4" ry="5" fill="#8a8a4a"/><circle cx="16" cy="12" r="2.5" fill="#a4c9c8"/><path d="M12 7H20" stroke="#4d4427" stroke-width="1.5"/></svg><span class="name">Ecuador</span><span class="rule">90 days</span></li>
          <li><svg class="flag" viewBox="0 0 32 24"><path fill="#1c49a7" d="M0 0H32V24H0Z"/><path fill="#fff" d="M0 8H32V16H0Z"/><path fill="#7fb98d" d="M13 10H19L18 14 16 15 14 14Z"/></svg><span class="name">El Salvador</span><span class="rule">180 days</span></li>
          <li><svg class="flag" viewBox="0 0 32 24"><path fill="#2f70c6" d="M0 0H32V8H0Z"/><path d="M0 8H32V16H0Z"/><path fill="#fff" d="M0 16H32V24H0Z"/></svg><span class="name">Estonia</span><span class="rule">visa free</span></li>
          <li><svg class="flag" viewBox="0 0 32 24"><path fill="#465fb5" d="M0 0H32V24H0Z"/><path fill="#f2cf4a" d="M0 4H32V20H0Z"/><path fill="#a3261d" d="M0 6H32V18H0Z"/><path d="M3 12H29" stroke="#c79a45"/><path d="M8 12Q12 7 16 7V17Q12 17 8 12Z"/><path fill="#fff" d="M24 12Q20 7 16 7V17Q20 17 24 12Z"/></svg><span class="name">eSwatini</span><span class="rule">30 days</span></li>
          <li><svg class="flag" viewBox="0 0 32 24"><path fill="#78b1de" d="M0 0H32V24H0Z"/><path fill="#24396e" d="M0 0H16V12H0Z"/><path d="M0 0L16 12M16 0L0 12" stroke="#fff" stroke-width="2"/><path d="M8 0V12M0 6H16" stroke="#fff" stroke-width="4"/><path d="M8 0V12M0 6H16" stroke="#c62f3c" stroke-width="2"/><path fill="#f5efe0" d="M23 6H31V14L27 18 23 14Z"/><path d="M23 7H31M27 8V17M23 12H31" stroke="#cf5555" stroke-width="1.5"/></svg><span class="name">Fiji</span><span class="rule">120 days</span></li>
          <li><svg class="flag" viewBox="0 0 32 24"><path fill="#fff" d="M0 0H32V24H0Z"/><path fill="#14306b" d="M7 0H13V24H7ZM0 9H32V15H0Z"/></svg><span class="name">Finland</span><span class="rule">visa free</span></li>
          <li><svg class="flag" viewBox="0 0 32 24"><path fill="#0b2350" d="M0 0H11V24H0Z"/><path fill="#fff" d="M11 0H22V24H11Z"/><path fill="#bf3034" d="M22 0H32V24H22Z"/></svg><span class="name">France</span><span class="rule">visa free</span></li>
          <li><svg class="flag" viewBox="0 0 32 24"><path fill="#bb2a36" d="M0 0H32V8H0Z"/><path fill="#12288a" d="M0 8H32V16H0Z"/><path fill="#3c7a37" d="M0 16H32V24H0Z"/></svg><span class="name">Gambia</span><span class="rule">90 days</span></li>
          <li><svg class="flag" viewBox="0 0 32 24"><path fill="#fff" d="M0 0H32V24H0Z"/><path fill="#e93522" d="M13 0H18V24H13ZM0 10H32V14H0Z"/></svg><span class="name">Georgia</span><span class="rule">360 days</span></li>
          <li><svg class="flag" viewBox="0 0 32 24"><path d="M0 0H32V8H0Z"/><path fill="#dc3a30" d="M0 8H32V16H0Z"/><path fill="#f7cf46" d="M0 16H32V24H0Z"/></svg><span class="name">Germany</span><span class="rule">visa free</span></li>
        </ul>
      </section>
    </div>
  </div>
</main>
</body>
</html>
```
FILE: styles.css
```css
:root {
  --ink: #1a2937;
  --muted: #4a5f6c;
  --line: #e9e3d8;
  --free: #539f66;
  --evisa: #4a8ab0;
  --arrival: #e6ab50;
  --required: #c46453;
  --none: #6d7280;
  --shadow: 0 14px 36px rgba(50, 45, 35, .07);
}

* { box-sizing: border-box; }

body {
  margin: 0;
  color: var(--ink);
  font: 20px/33px "Open Sans", "Noto Sans", sans-serif;
  background: radial-gradient(ellipse 55% 1500px at 45% 0, #fdf8f0 0, #fcf7ef 50%, #f8f3eb 100%) #f8f3eb;
}

h1, h2, h3, p, ul { margin: 0; padding: 0; }
ul { list-style: none; }

.wrap {
  width: min(1447px, 100% - 48px);
  margin-left: max(24px, calc(50% - 792px));
}

.site-header {
  background: #f6f1eb;
  border-bottom: 2px solid #ebe7db;
}
.header-row {
  display: flex;
  justify-content: space-between;
  align-items: center;
  min-height: 83px;
}
.brand {
  padding-bottom: 2px;
  color: var(--ink);
  font: 700 29px/40px "DejaVu Serif Condensed", "DejaVu Serif", serif;
  text-decoration: none;
}
.nav { display: flex; gap: 27px; }
.nav a {
  padding: 4px 0 8px;
  border-bottom: 3px solid transparent;
  color: var(--muted);
  font-size: 19px;
  font-weight: 600;
  line-height: 28px;
  text-decoration: none;
}
.nav a.active { border-color: #438a8c; }

h1 {
  padding-top: 10px;
  font: 700 49px/62px "DejaVu Serif Condensed", "DejaVu Serif", serif;
}
.lead { margin-top: 18px; color: var(--muted); }

.layout {
  display: grid;
  grid-template-columns: 413px minmax(0, 1fr);
  gap: 42px;
  margin-top: 42px;
}
.card {
  background: #fff;
  border: 1px solid var(--line);
  border-radius: 21px;
  box-shadow: var(--shadow);
}

.panel { padding: 37px 31px; }
.panel h2 { font-size: 29px; line-height: 38px; }
.intro { margin: 31px -10px 0 0; }
.picker {
  display: flex;
  align-items: center;
  gap: 17px;
  margin-top: 22px;
}
.picker-flag {
  flex: 0 0 52px;
  height: 37px;
  overflow: hidden;
  border-radius: 6px;
}
.picker-flag svg { display: block; }
.picker-flag span { display: block; line-height: 28px; }
.picker-field { position: relative; flex: 0 0 354px; }
.picker-field select {
  width: 100%;
  height: 55px;
  padding: 0 21px;
  border: 2px solid #2b62cc;
  border-radius: 15px;
  appearance: none;
  background: #fff;
  color: #000;
  font: 20px "Liberation Sans", sans-serif;
}
.chevron { position: absolute; right: 5px; top: 24px; }
.current { margin-top: 17px; font-weight: 600; }

.stats {
  display: grid;
  grid-template-columns: repeat(2, minmax(0, 1fr));
  gap: 17px;
  margin-top: 21px;
}
.stat {
  padding: 17px;
  background: #f7f3ec;
  border: 1px solid var(--line);
  border-radius: 15px;
  white-space: nowrap;
}
.stat strong, .stat span { display: block; }
.stat strong { font-size: 26px; line-height: 39px; }

.legend {
  display: grid;
  gap: 11px;
  margin-top: 31px;
  font-size: 18px;
  line-height: 29px;
}
.legend li { display: flex; align-items: center; gap: 13px; }
.swatch { width: 18px; height: 18px; border-radius: 5px; }
.swatch.free { background: var(--free); }
.swatch.evisa { background: var(--evisa); }
.swatch.arrival { background: var(--arrival); }
.swatch.required { background: var(--required); }
.swatch.none { background: var(--none); }
.note {
  margin-top: 32px;
  color: var(--muted);
  font-size: 18px;
  line-height: 30px;
}

.results { display: grid; align-content: start; gap: 32px; position: relative; }
.map-card { overflow: hidden; }
.map {
  position: relative;
  background: linear-gradient(#f5f0e9, #f3f3ee 50%, #f0f5f6);
}
.world { display: block; width: 100%; }
.world path { stroke-linejoin: round; }
.world .free path, .world .evisa path, .world .arrival path, .world .required path,
.world path.required, .world .line {
  stroke: #dfe9e0;
  stroke-width: 2;
}
.world .line { fill: none; }
.world .land { fill: #f2efe5; }
.world .free { fill: #63a674; }
.world .evisa { fill: #5b94b8; }
.world .arrival { fill: #e8b35f; }
.world .required { fill: #ca6f5e; }
.world .soft-required { fill: #e6dbd2; }
.world .gap { fill: #f4f2ed; }
.world .land-line { fill: none; stroke: #e4ece2; stroke-width: 3; }
.world .dot circle { stroke-width: 4; }
.world .dot.free { stroke: var(--free); }
.world .dot.cluster { fill: var(--free); }
.world .dot.arrival { stroke: var(--arrival); }
.world .dot.required { stroke: var(--required); }

.zoom {
  position: absolute;
  right: 13px;
  bottom: 13px;
  width: 44px;
  border: 2px solid #c2c2be;
  border-radius: 5px;
  overflow: hidden;
}
.zoom button {
  display: grid;
  place-items: center;
  width: 100%;
  height: 40px;
  padding: 0;
  border: 0;
  background: #fff;
}
.zoom button + button { height: 39px; border-top: 1px solid #ccc; background: #f4f4f4; }
.map-caption {
  padding: 15px 21px;
  border-top: 2px solid #eae6dc;
  background: #faf8f2;
  font-size: 19px;
}

.list-card { padding: 25px 25px 24px; }
.list-head { display: flex; justify-content: space-between; align-items: center; }
.pill {
  padding: 0 14px;
  border-radius: 20px;
  background: var(--free);
  color: #fff;
  font-size: 16px;
  line-height: 39px;
}
.count { font-size: 25px; }
.countries {
  display: grid;
  grid-template-columns: repeat(3, minmax(0, 1fr));
  gap: 13px 21px;
  margin-top: 16px;
}
.countries li {
  display: flex;
  align-items: center;
  gap: 12px;
  font-size: 18px;
  line-height: 30px;
}
.flag {
  flex: none;
  width: 32px;
  height: 24px;
  border-radius: 5px;
  box-shadow: 0 3px 9px rgba(20, 35, 50, .16);
}
.name { flex: 1; }
.rule {
  color: var(--muted);
  font-size: 16px;
  line-height: 27px;
  white-space: nowrap;
}
.tight .rule { width: 67px; padding-right: 10px; white-space: normal; }
```
